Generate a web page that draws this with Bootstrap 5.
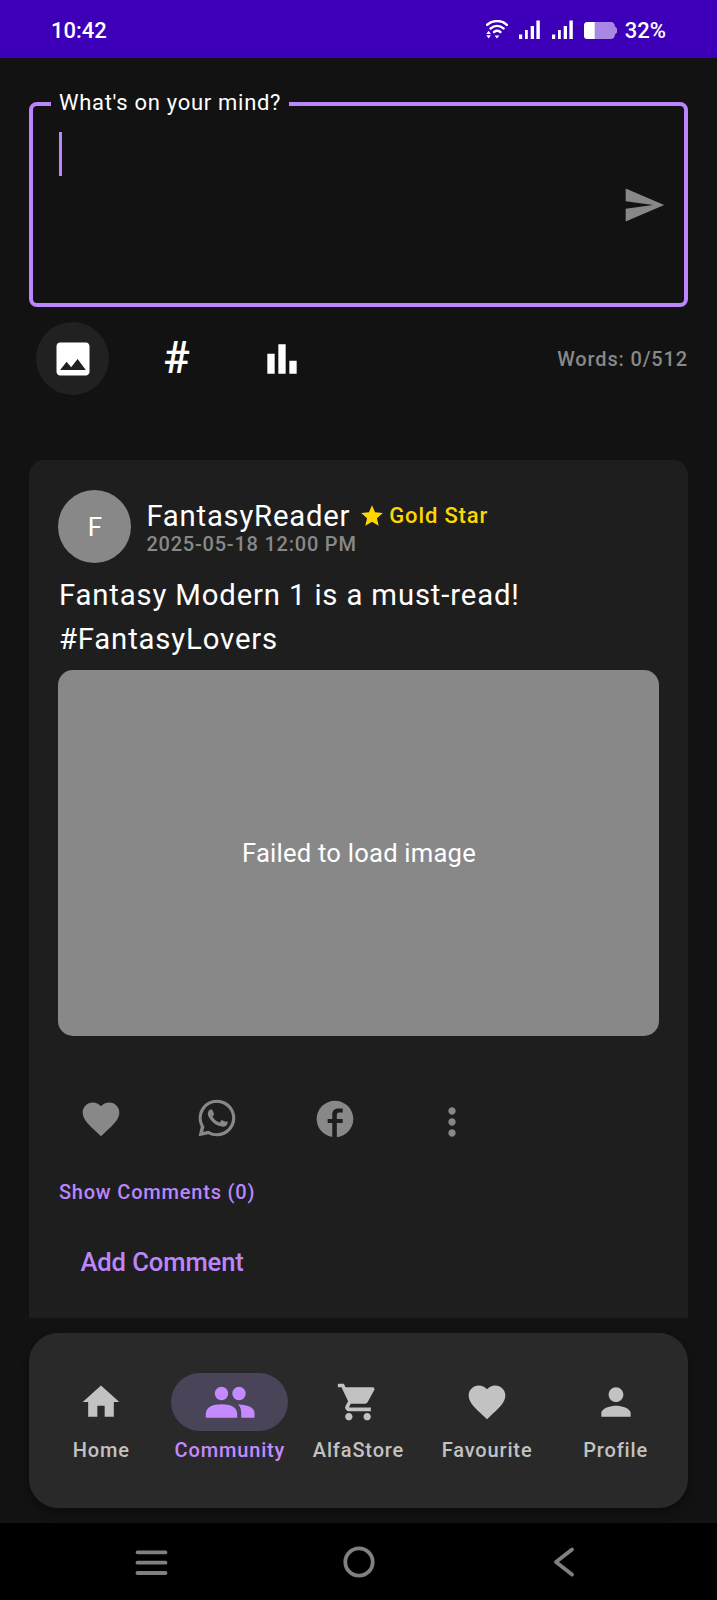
<!DOCTYPE html>
<html lang="en" data-bs-theme="dark">
<head>
<meta charset="utf-8">
<meta name="viewport" content="width=device-width, initial-scale=1">
<title>Community</title>
<link href="https://cdn.jsdelivr.net/npm/bootstrap@5.3.0/dist/css/bootstrap.min.css" rel="stylesheet">
<style>
  :root { --accent: #bb86fc; --muted: #888; }
  body { background: #121212; color: #fff; font-family: Roboto, "Liberation Sans", sans-serif; line-height: 1; height: 1600px; overflow: hidden; }
  svg { display: block; flex: none; fill: currentColor; }
  .ic { width: 44px; height: 44px; }
  .fw-medium5 { font-weight: 500; }
  .status-bar { height: 58px; background: #3d00b8; padding: 4px 51px 0 51px; font-size: 22px; font-weight: 500; }
  .status-icons { gap: 11.5px; }
  .status-icons .raised { margin-top: -4px; }
  .status-icons .battery { margin-top: -2px; }
  .status-icons .percent { margin-left: -4px; }
  .page { padding: 44px 29px 0; height: 1465px; }
  /* outlined text field; the legend cuts the top border */
  .composer { height: 205px; border: 4px solid var(--accent); border-radius: 8px; }
  .composer-label { top: -16px; left: 18px; background: #121212; padding: 0 8px; height: 26px; line-height: 26px; font-size: 22px; letter-spacing: .7px; white-space: nowrap; }
  .caret { width: 3.5px; height: 44px; margin: 25.5px 0 0 25.5px; background: var(--accent); }
  .send { margin: 76.5px 18px 0 0; color: var(--muted); }
  .tools { height: 73px; margin-top: 15px; padding-left: 7px; gap: 31.5px; }
  .tool { width: 73px; height: 73px; }
  .tool-active { background: #212121; color: #fff; }
  .hash { font-size: 44px; font-weight: 500; padding: 0 1px 1px 0; }
  .label-sm { font-size: 20px; font-weight: 500; letter-spacing: .85px; }
  .muted { color: var(--muted); }
  .post { height: 858px; margin-top: 65px; background: #1e1e1e; border: 0; border-radius: 15px 15px 0 0; padding: 30px 29.4px 0; }
  .avatar { width: 73px; height: 73px; background: var(--muted); font-size: 26px; }
  .byline { margin: 0 0 0 15px; }
  .author { font-size: 29.3px; letter-spacing: .77px; line-height: 32px; }
  .author > span:first-child { margin-top: -1px; }
  .stamp { font-size: 20px; font-weight: 500; letter-spacing: .78px; margin-top: 2px; margin-bottom: -1px; }
  .gold { color: #ffd600; font-size: 22px; letter-spacing: .85px; }
  .star { margin-left: 9px; }
  .body-text { font-size: 29.3px; letter-spacing: .85px; line-height: 44px; margin: 10px 0 0 .5px; }
  .failed { height: 366px; margin-top: 9px; padding: 2px 0 0 1px; border-radius: 15px; background: var(--muted); font-size: 25.6px; letter-spacing: .22px; }
  .actions { margin: 61px 0 0 -1px; padding-left: 22px; gap: 73px; color: var(--muted); }
  .actions .chat { margin: -1px 1px 1px -1px; }
  .actions .more { margin: 2.5px 0 -2.5px 0; }
  .accent { color: var(--accent); }
  .show-comments { margin: 41px 0 0 .5px; letter-spacing: .8px; }
  .add-comment { font-size: 25.6px; letter-spacing: -.1px; font-weight: 500; margin: 48px 0 0 22px; }
  .bottom-nav { height: 175px; margin-top: 15px; background: #292929; border-radius: 29px; padding: 40px 8px 0; box-shadow: 0 5px 9px rgba(0,0,0,.35); color: #c2c2c2; }
  .pill { width: 117px; height: 58px; border-radius: 29px; }
  .pill-active { background: #4a4458; }
  .tab-item { flex: 1 1 0; gap: 9px; }
  .tab-active { color: #c58aff; }
  .sys-nav { height: 77px; background: #000; gap: 171px; }
  .sys-nav svg { fill: none; stroke: #808080; stroke-width: 3.8; stroke-linecap: round; stroke-linejoin: round; }
</style>
</head>
<body>
<header class="status-bar d-flex align-items-center">
  <span>10:42</span>
  <div class="status-icons ms-auto d-flex align-items-center">
    <svg class="raised" width="22" height="19" viewBox="0 0 22 19"><g fill="none" stroke="#fff" stroke-width="2.5" stroke-linecap="round"><path d="M1.2 4.8C7-.2 15.5-.2 20.8 4.8M4.6 8.4c4-3.2 9-3.200 12.900 0M8 12c2-1.500 4.400-1.500 6.400 0"/></g><path d="M11 18.500l-2.400-3h4.800zM.3 14l2.300-3.300L4.900 14zM.3 15.200l2.300 3.300 2.300-3.300z"/></svg>
    <svg class="raised" width="21" height="19" viewBox="0 0 21 19"><path d="M0 14.500h3.200V19H0zM6 10h2.800v9H6zM11.700 6h3.300v13h-3.300zM17.400.5h3.400V19h-3.400z"/></svg>
    <svg class="raised" width="21" height="19" viewBox="0 0 21 19"><path d="M0 14.500h3.200V19H0zM6 10h2.800v9H6zM11.700 6h3.300v13h-3.300zM17.400.5h3.400V19h-3.400z"/></svg>
    <svg class="battery" width="33" height="17" viewBox="0 0 33 17"><path fill="#a888e3" d="M3.500 0H27q3.500 0 4 4.500l2 2v4l-2 2q-.5 4.500-4 4.500H3.500Q0 17 0 13.500v-10Q0 0 3.500 0z"/><path d="M10.700 0H3.500Q0 0 0 3.500v10Q0 17 3.500 17h7.200z"/></svg>
    <span class="percent">32%</span>
  </div>
</header>

<main class="page">
  <section class="composer position-relative d-flex justify-content-between">
    <span class="composer-label position-absolute">What's on your mind?</span>
    <div class="caret"></div>
    <svg class="ic send" viewBox="0 0 24 24"><path d="M2.010 21L23 12 2.010 3 2 10l15 2-15 2z"/></svg>
  </section>

  <div class="tools d-flex align-items-center">
    <div class="tool tool-active rounded-circle d-flex align-items-center justify-content-center">
      <svg class="ic" viewBox="0 0 24 24"><path d="M21 19V5c0-1.100-.9-2-2-2H5c-1.100 0-2 .9-2 2v14c0 1.100.9 2 2 2h14c1.100 0 2-.9 2-2zM8.500 13.500l2.500 3.010L14.500 12l4.500 6H5l3.500-4.500z"/></svg>
    </div>
    <div class="tool hash d-flex align-items-center justify-content-center"><span>#</span></div>
    <div class="tool d-flex align-items-center justify-content-center">
      <svg class="ic" viewBox="0 0 24 24"><path d="M4 9.200h4V20H4zM16 13h4v7h-4zM10 4h4v16h-4z"/></svg>
    </div>
    <span class="label-sm muted ms-auto">Words: 0/512</span>
  </div>

  <article class="card post">
    <div class="d-flex align-items-center">
      <div class="avatar rounded-circle d-flex align-items-center justify-content-center">F</div>
      <div class="byline">
        <div class="d-flex align-items-center author">
          <span>FantasyReader</span>
          <svg class="gold star" width="26" height="26" viewBox="0 0 24 24"><path d="M12 17.270L18.180 21l-1.640-7.030L22 9.240l-7.190-.61L12 2 9.190 8.630 2 9.240l5.460 4.730L5.820 21z"/></svg>
          <span class="gold fw-medium5 ms-1">Gold Star</span>
        </div>
        <div class="stamp muted">2025-05-18 12:00 PM</div>
      </div>
    </div>
    <p class="body-text">Fantasy Modern 1 is a must-read!<br>#FantasyLovers</p>
    <div class="failed d-flex align-items-center justify-content-center">Failed to load image</div>
    <div class="actions d-flex">
      <svg class="ic" viewBox="0 0 24 24"><path d="M12 21.350l-1.450-1.320C5.400 15.360 2 12.280 2 8.500 2 5.420 4.420 3 7.500 3c1.740 0 3.410.81 4.500 2.090C13.090 3.810 14.760 3 16.500 3 19.580 3 22 5.420 22 8.500c0 3.780-3.400 6.860-8.550 11.540L12 21.350z"/></svg>
      <svg class="ic chat" viewBox="0 0 24 24"><path fill-rule="evenodd" d="M12 2a10 10 0 1 1-4.700 18.830L2 22l1.170-5.300A10 10 0 0 1 12 2zm0 1.700a8.300 8.300 0 0 0-7.100 12.600l.3.500-.8 2.900 2.900-.8.5.3A8.300 8.300 0 1 0 12 3.700z"/><path d="M16.560 13.990c-.25-.12-1.470-.72-1.690-.81-.23-.08-.39-.12-.56.12-.17.25-.64.810-.78.970-.14.170-.29.190-.54.060-.25-.12-1.050-.39-1.990-1.230-.74-.66-1.230-1.470-1.380-1.720-.14-.25-.02-.38.110-.51.110-.11.250-.29.370-.43s.17-.25.250-.41c.08-.17.040-.31-.02-.43s-.56-1.340-.76-1.840c-.2-.48-.41-.42-.56-.43h-.48c-.17 0-.43.060-.66.310-.22.250-.86.850-.86 2.070s.89 2.400 1.010 2.560c.12.170 1.750 2.670 4.230 3.740 2.400.95 2.900.75 3.420.71.520-.05 1.680-.69 1.920-1.350.24-.66.240-1.230.17-1.350-.08-.12-.25-.19-.5-.31z"/></svg>
      <svg class="ic" viewBox="0 0 24 24"><path d="M22 12c0-5.520-4.480-10-10-10S2 6.480 2 12c0 4.700 3.240 8.640 8.500 9.850V14.200H8v-2.200h2.500V9.500C10.500 7.570 11.800 6.300 13.600 6.300H16.200v2.200h-2c-.7 0-1.200.5-1.200 1.200V12h3.200v2.200H13v7.700c5.050-.5 9-4.850 9-9.900z"/></svg>
      <svg class="ic more" viewBox="0 0 24 24"><path d="M12 8c1.100 0 2-.9 2-2s-.9-2-2-2-2 .9-2 2 .9 2 2 2zm0 2c-1.100 0-2 .9-2 2s.9 2 2 2 2-.9 2-2-.9-2-2-2zm0 6c-1.100 0-2 .9-2 2s.9 2 2 2 2-.9 2-2-.9-2-2-2z"/></svg>
    </div>
    <div class="label-sm accent show-comments">Show Comments (0)</div>
    <div class="add-comment accent">Add Comment</div>
  </article>

  <nav class="bottom-nav d-flex">
    <div class="tab-item d-flex flex-column align-items-center">
      <span class="pill d-flex align-items-center justify-content-center"><svg class="ic" viewBox="0 0 24 24"><path d="M10 20v-6h4v6h5v-8h3L12 3 2 12h3v8z"/></svg></span>
      <span class="label-sm">Home</span>
    </div>
    <div class="tab-item tab-active d-flex flex-column align-items-center">
      <span class="pill pill-active d-flex align-items-center justify-content-center"><svg width="50" height="44" viewBox="0 0 50 44"><circle cx="16.500" cy="13.500" r="6.700"/><circle cx="34" cy="13.500" r="6.700"/><path d="M.8 37.700v-4.500Q2 24.300 16.500 24.300T32.200 33.200v4.500zM33 24.300q16.500 1.200 16.500 8.900v4.500H36.200v-4.500q0-5.700-3.200-8.900z"/></svg></span>
      <span class="label-sm">Community</span>
    </div>
    <div class="tab-item d-flex flex-column align-items-center">
      <span class="pill d-flex align-items-center justify-content-center"><svg class="ic" viewBox="0 0 24 24"><path d="M7 18c-1.100 0-1.990.9-1.990 2S5.900 22 7 22s2-.9 2-2-.9-2-2-2zM1 2v2h2l3.600 7.590-1.350 2.450c-.16.280-.25.610-.25.960 0 1.100.9 2 2 2h12v-2H7.420c-.14 0-.25-.11-.25-.25l.03-.12.9-1.630h7.450c.75 0 1.410-.41 1.750-1.030l3.580-6.490A1.003 1.003 0 0 0 20 4H5.210l-.94-2H1zm16 16c-1.100 0-1.990.9-1.990 2s.89 2 1.990 2 2-.9 2-2-.9-2-2-2z"/></svg></span>
      <span class="label-sm">AlfaStore</span>
    </div>
    <div class="tab-item d-flex flex-column align-items-center">
      <span class="pill d-flex align-items-center justify-content-center"><svg class="ic" viewBox="0 0 24 24"><path d="M12 21.350l-1.450-1.320C5.400 15.360 2 12.280 2 8.500 2 5.420 4.420 3 7.500 3c1.740 0 3.410.81 4.500 2.090C13.090 3.810 14.760 3 16.500 3 19.580 3 22 5.420 22 8.500c0 3.780-3.400 6.860-8.550 11.540L12 21.350z"/></svg></span>
      <span class="label-sm">Favourite</span>
    </div>
    <div class="tab-item d-flex flex-column align-items-center">
      <span class="pill d-flex align-items-center justify-content-center"><svg class="ic" viewBox="0 0 24 24"><path d="M12 12c2.210 0 4-1.790 4-4s-1.790-4-4-4-4 1.790-4 4 1.790 4 4 4zm0 2c-2.670 0-8 1.340-8 4v2h16v-2c0-2.660-5.330-4-8-4z"/></svg></span>
      <span class="label-sm">Profile</span>
    </div>
  </nav>
</main>

<footer class="sys-nav d-flex align-items-center justify-content-center">
  <svg width="36" height="36" viewBox="0 0 36 36"><path d="M3.500 8.300h28M3.500 18.700h28M3.500 29h28"/></svg>
  <svg width="36" height="36" viewBox="0 0 36 36"><circle cx="18" cy="18" r="13.700"/></svg>
  <svg width="36" height="36" viewBox="0 0 36 36"><path d="M24 5.500L8 18l16 12.500"/></svg>
</footer>
<script src="https://cdn.jsdelivr.net/npm/bootstrap@5.3.0/dist/js/bootstrap.bundle.min.js"></script>
</body>
</html>
